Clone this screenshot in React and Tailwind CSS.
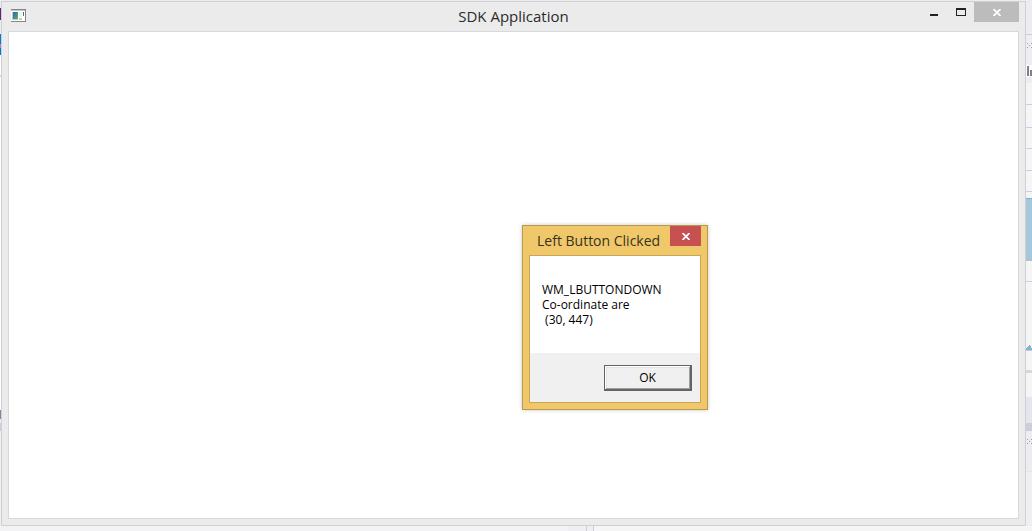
const leftEdge = [
  'h-2 bg-[#ededf1]',
  'h-3 bg-[#68217a]',
  'h-3.5 bg-[#ededf1]',
  'h-2.5 bg-[#007acc]',
  'h-1 bg-[#a08cc8]',
  'h-[7px] bg-[#007acc]',
  'h-5 bg-white',
  'h-0.5 bg-[#d5d5dc]',
  'h-[333px] bg-white',
  'h-[9px] bg-[#83839b]',
  'h-1 bg-[#eeeef2]',
  'h-2 bg-[#ccccdc]',
  'grow bg-[#efeff3]',
];

const sections = [
  'h-5 border-b border-[#cccedb]',
  'h-[23px] border-b border-[#cccedb]',
  'h-[21px] border-b border-[#cccedb]',
  'h-[22px] border-b border-[#cccedb]',
  'h-[21px] border-b border-[#cccedb]',
  'h-1.5',
  'h-[63px] border-t border-b border-t-[#78b2cd] border-b-[#b9bfd2] bg-[#a4c7da]',
  'h-[21px] border-b border-[#cccedb]',
];

function Grip() {
  return (
    <svg className="block h-2 w-1.5" viewBox="0 0 6 8" fill="#9c9ca6" shapeRendering="crispEdges" aria-hidden="true">
      <path d="M1 2h1v1H1zM5 2h1v1H5zM3 4h1v1H3zM1 6h1v1H1zM5 6h1v1H5z" />
    </svg>
  );
}

function BackdropRight() {
  return (
    <div className="flex w-1.5 shrink-0 flex-col overflow-hidden bg-[#f5f5f5]">
      <div className="h-[35px] shrink-0 border-b border-[#cccedb] bg-[#ededf1]" />
      <div className="flex h-12 shrink-0 flex-col bg-[#eeeef2] pt-1.5">
        <Grip />
        <svg className="mt-4 block h-3 w-1.5" viewBox="0 0 6 12" shapeRendering="crispEdges" aria-hidden="true">
          <path fill="#fff" d="M0 0h6v12H0z" />
          <path fill="#808086" d="M1 1h2v10H1zM4 5h2v6H4z" />
        </svg>
      </div>
      <div className="h-0.5 shrink-0" />
      {sections.map((row, i) => <div key={i} className={`shrink-0 ${row}`} />)}
      <svg className="mt-[63px] block h-[5px] w-1.5 shrink-0" viewBox="0 0 6 5" shapeRendering="crispEdges" aria-hidden="true">
        <path fill="#84b3cb" d="M3 0h1v1h1v2h1v2H0V3h1V2h1V1h1z" />
      </svg>
      <div className="h-px shrink-0 bg-[#c6cada]" />
      <div className="h-[19px] shrink-0" />
      <div className="h-[3px] shrink-0 bg-[#d6d6db]" />
      <div className="h-6 shrink-0" />
      <div className="h-[26px] shrink-0 bg-[#e5e6ed]" />
      <div className="h-2 shrink-0 bg-[#cccedb]" />
      <div className="h-[41px] shrink-0 border-b border-[#e5e5e9] bg-[#ededf1] pt-1.5"><Grip /></div>
      <div className="grow bg-[#efeff2]" />
    </div>
  );
}

function AppIcon() {
  return (
    <svg className="h-[13px] w-[15px]" viewBox="0 0 15 13" shapeRendering="crispEdges" aria-hidden="true">
      <defs>
        <linearGradient id="pane" x1="0" y1="0" x2="1" y2="1">
          <stop offset="0" stopColor="#2f68a8" />
          <stop offset=".5" stopColor="#3c9084" />
          <stop offset="1" stopColor="#62b84c" />
        </linearGradient>
      </defs>
      <path fill="#fff" d="M0 0h15v13H0z" />
      <path fill="#858585" d="M0 0h15v1H0zM14 0h1v13h-1zM0 12h15v1H0z" />
      <path fill="#c8c8c8" d="M0 1h14v1H0zM8 9h3v2H8z" />
      <path fill="#bac8d5" d="M1 3h6v8H1z" />
      <path fill="url(#pane)" d="M2 3h5v7H2z" />
      <path fill="#efefef" d="M8 3h3v5H8z" />
      <path fill="#2d6b9c" d="M12 3h1v2h-1z" />
      <path fill="#43835c" d="M12 5h1v2h-1z" />
    </svg>
  );
}

function CloseGlyph() {
  return (
    <svg className="h-[7px] w-2" viewBox="0 0 8 7" fill="none" stroke="white" strokeWidth="1.7" aria-hidden="true">
      <path d="M.5 0L7.5 7M7.5 0L.5 7" />
    </svg>
  );
}

function MessageDialog() {
  return (
    <section
      role="dialog"
      aria-labelledby="dialog-title"
      className="absolute top-[225px] left-[522px] w-[186px] border border-[#b99850] bg-[#f0c869] px-1.5 pb-1.5 shadow-[0_0_4px_rgba(0,0,0,0.22)]"
    >
      <header className="flex h-[29px] items-start justify-between pl-2">
        <h2 id="dialog-title" className="pt-1 text-sm leading-[22px] whitespace-nowrap text-[#39321f]">Left Button Clicked</h2>
        <button type="button" aria-label="Close message" className="flex h-5 w-[31px] shrink-0 items-center justify-center bg-[#c75050]">
          <CloseGlyph />
        </button>
      </header>
      <div className="border border-[#c9a758] bg-white">
        <p className="h-[97px] pt-[26px] pl-3 text-xs leading-[15px] whitespace-pre text-black">
          {'WM_LBUTTONDOWN\nCo-ordinate are\n (30, 447)'}
        </p>
        <footer className="flex justify-end bg-[#f0f0f0] pt-3 pr-2 pb-[11px]">
          <button type="button" className="h-[26px] w-[88px] border border-r-2 border-b-2 border-[#646464] bg-[#f0f0f0] text-xs leading-[15px] text-black shadow-[inset_1px_1px_0_#fff,inset_-1px_-1px_0_#a0a0a0,inset_2px_2px_0_#e3e3e3]">
            OK
          </button>
        </footer>
      </div>
    </section>
  );
}

export default function App() {
  return (
    <div className="relative flex h-screen w-full flex-col overflow-hidden bg-[#ededf1] font-['Open_Sans','Noto_Sans',sans-serif]">
      <div className="flex min-h-0 grow">
        <div className="flex w-px shrink-0 flex-col">
          {leftEdge.map((band, i) => <div key={i} className={band} />)}
        </div>
        <main className="mt-px flex min-w-0 grow flex-col border border-[#cfd0d3] bg-[#ebebeb] px-1.5 pb-1.5">
          <header className="grid h-[29px] shrink-0 grid-cols-[1fr_auto_1fr] items-start">
            <div className="pt-[7px] pl-[3px]"><AppIcon /></div>
            <h1 className="pt-1 text-[15px] leading-5 text-[#2b2b2b]">SDK Application</h1>
            <div className="flex justify-end">
              <button type="button" aria-label="Minimize" className="flex h-5 w-[27px] items-center justify-center">
                <svg className="h-2.5 w-2" viewBox="0 0 8 10" shapeRendering="crispEdges" aria-hidden="true">
                  <path fill="#222" d="M0 7h8v2H0z" />
                </svg>
              </button>
              <button type="button" aria-label="Maximize" className="flex h-5 w-[27px] items-center justify-center">
                <svg className="h-2 w-2.5" viewBox="0 0 10 8" shapeRendering="crispEdges" aria-hidden="true">
                  <path fill="#222" fillRule="evenodd" d="M0 0h10v8H0zM1 2v5h8V2z" />
                </svg>
              </button>
              <button type="button" aria-label="Close window" className="flex h-5 w-[45px] items-center justify-center bg-[#bcbcbc]">
                <CloseGlyph />
              </button>
            </div>
          </header>
          <div className="grow border border-[#d7d8d9] bg-white" />
        </main>
        <BackdropRight />
      </div>
      <div className="flex h-[5px] shrink-0">
        <div className="w-[568px] bg-[#f3f3f6]" />
        <div className="w-[26px] border-r border-[#cccedb] bg-[#efeff3] pr-1.5">
          <div className="h-full border-r border-[#cccedb]" />
        </div>
        <div className="grow bg-[#f5f5f6]" />
      </div>
      <MessageDialog />
    </div>
  );
}
